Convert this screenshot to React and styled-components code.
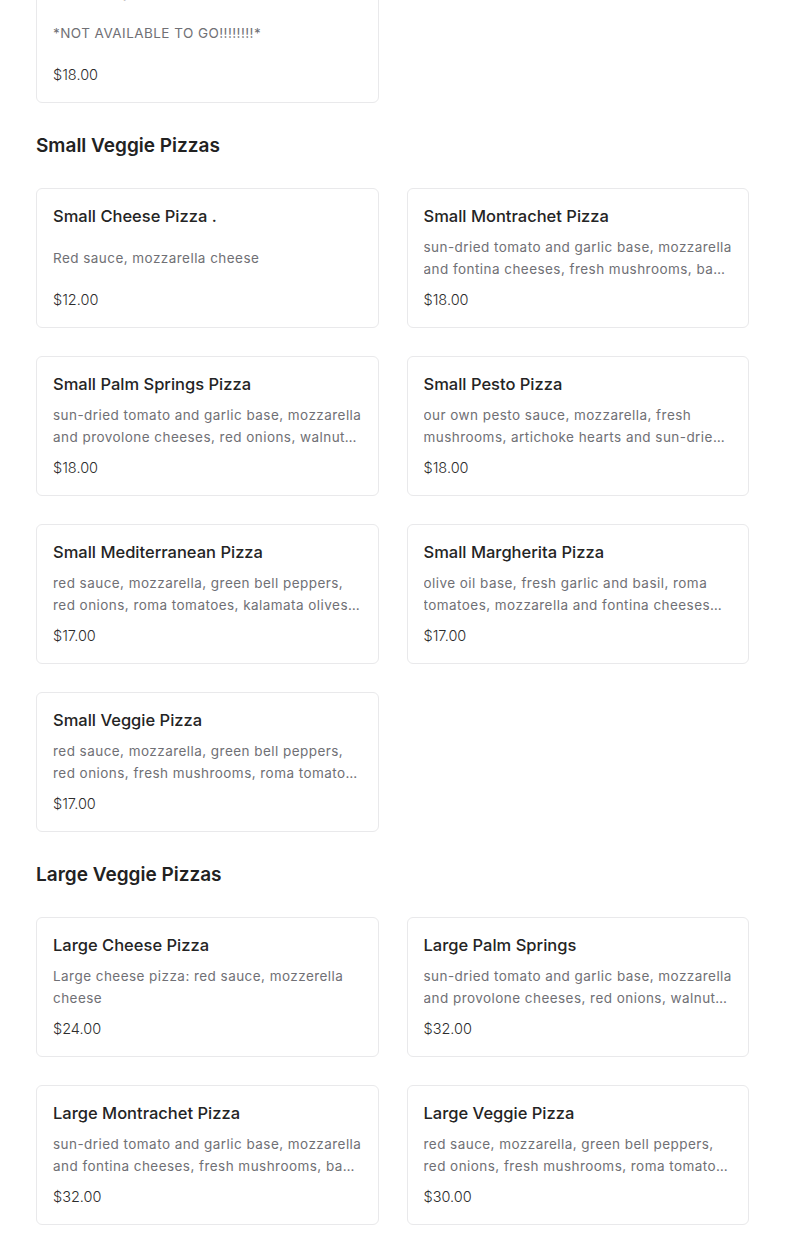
import styled, { createGlobalStyle } from "styled-components"

const GlobalStyle = createGlobalStyle`
    body {
        margin: 0;
        background: #ffffff;
        font-family: Inter, "Open Sans", Arial, sans-serif;
        color: #222222;
    }
`

const Page = styled.div`
    padding: 0 36px 24px 36px;
    margin-top: -37px;
`

const Section = styled.section`
    & + & {
        margin-top: 29px;
    }
`

const SectionTitle = styled.h2`
    margin: 0 0 28px 0;
    font-size: 19px;
    line-height: 28px;
    font-weight: 600;
    color: #222222;
`

const Grid = styled.div`
    display: grid;
    grid-template-columns: 1fr 1fr;
    column-gap: 28px;
    row-gap: 28px;
`

const Card = styled.div`
    border: 1px solid #e9e9eb;
    border-radius: 6px;
    padding: 15px 16px 16px 16px;
    height: 140px;
    box-sizing: border-box;
    display: flex;
    flex-direction: column;
`

const Name = styled.div`
    font-size: 16.5px;
    line-height: 24px;
    font-weight: 500;
    color: #242424;
    white-space: nowrap;
    overflow: hidden;
    text-overflow: ellipsis;
`

const DescBox = styled.div`
    margin-top: 8px;
    height: 44px;
    display: flex;
    align-items: center;
`

const Desc = styled.p`
    margin: 0;
    font-size: 13.5px;
    line-height: 22px;
    font-weight: 400;
    letter-spacing: 0.45px;
    color: #707075;
    display: -webkit-box;
    -webkit-line-clamp: 2;
    -webkit-box-orient: vertical;
    overflow: hidden;
`

const Price = styled.div`
    margin-top: 9px;
    font-size: 14.5px;
    line-height: 22px;
    font-weight: 300;
    color: #2d2d2d;
`

const sections = [
    {
        title: null,
        items: [
            { name: "Dine In Special", desc: "*NOT AVAILABLE TO GO!!!!!!!!*", price: "$18.00" },
        ],
    },
    {
        title: "Small Veggie Pizzas",
        items: [
            { name: "Small Cheese Pizza .", desc: "Red sauce, mozzarella cheese", price: "$12.00" },
            { name: "Small Montrachet Pizza", desc: "sun-dried tomato and garlic base, mozzarella and fontina cheeses, fresh mushrooms, basil and montrachet goat cheese", price: "$18.00" },
            { name: "Small Palm Springs Pizza", desc: "sun-dried tomato and garlic base, mozzarella and provolone cheeses, red onions, walnuts, and gorgonzola cheese", price: "$18.00" },
            { name: "Small Pesto Pizza", desc: "our own pesto sauce, mozzarella, fresh mushrooms, artichoke hearts and sun-dried tomatoes", price: "$18.00" },
            { name: "Small Mediterranean Pizza", desc: "red sauce, mozzarella, green bell peppers, red onions, roma tomatoes, kalamata olives, and feta cheese", price: "$17.00" },
            { name: "Small Margherita Pizza", desc: "olive oil base, fresh garlic and basil, roma tomatoes, mozzarella and fontina cheeses and parmesan", price: "$17.00" },
            { name: "Small Veggie Pizza", desc: "red sauce, mozzarella, green bell peppers, red onions, fresh mushrooms, roma tomatoes and black olives", price: "$17.00" },
        ],
    },
    {
        title: "Large Veggie Pizzas",
        items: [
            { name: "Large Cheese Pizza", desc: "Large cheese pizza: red sauce, mozzerella cheese", price: "$24.00" },
            { name: "Large Palm Springs", desc: "sun-dried tomato and garlic base, mozzarella and provolone cheeses, red onions, walnuts, and gorgonzola cheese", price: "$32.00" },
            { name: "Large Montrachet Pizza", desc: "sun-dried tomato and garlic base, mozzarella and fontina cheeses, fresh mushrooms, basil and montrachet goat cheese", price: "$32.00" },
            { name: "Large Veggie Pizza", desc: "red sauce, mozzarella, green bell peppers, red onions, fresh mushrooms, roma tomatoes and black olives", price: "$30.00" },
        ],
    },
]

function MenuCard({ name, desc, price }) {
    return (
        <Card>
            <Name>{name}</Name>
            <DescBox>
                <Desc>{desc}</Desc>
            </DescBox>
            <Price>{price}</Price>
        </Card>
    )
}

function App() {
    return (
        <Page>
            <GlobalStyle />
            {sections.map((section, i) => (
                <Section key={i}>
                    {section.title && <SectionTitle>{section.title}</SectionTitle>}
                    <Grid>
                        {section.items.map((item) => (
                            <MenuCard key={item.name} {...item} />
                        ))}
                    </Grid>
                </Section>
            ))}
        </Page>
    )
}

export default App
